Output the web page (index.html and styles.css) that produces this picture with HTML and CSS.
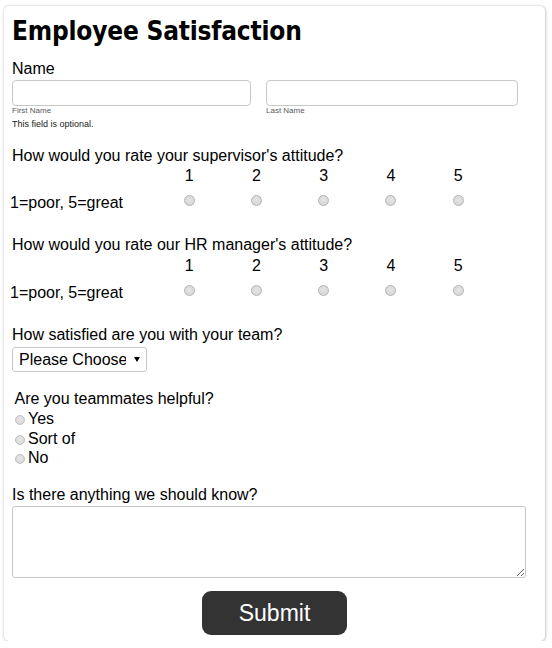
FILE: index.html
```html
<!DOCTYPE html>
<html lang="en">
<head>
<meta charset="utf-8">
<title>Employee Satisfaction</title>
<link rel="stylesheet" href="styles.css">
</head>
<body>
<form class="card">
  <h1 class="title">Employee Satisfaction</h1>

  <div class="q q-name">Name</div>
  <div class="name-row">
    <div class="name-col name-first">
      <input type="text" class="text-in">
      <span class="sub">First Name</span>
    </div>
    <div class="name-col name-last">
      <input type="text" class="text-in">
      <span class="sub">Last Name</span>
    </div>
  </div>
  <div class="hint">This field is optional.</div>

  <div class="block block-first">
    <div class="q">How would you rate your supervisor's attitude?</div>
    <div class="rating">
      <span></span>
      <span class="num">1</span><span class="num">2</span><span class="num">3</span><span class="num">4</span><span class="num">5</span>
      <span class="scale">1=poor, 5=great</span>
      <input type="radio" name="sup" class="radio"><input type="radio" name="sup" class="radio"><input type="radio" name="sup" class="radio"><input type="radio" name="sup" class="radio"><input type="radio" name="sup" class="radio">
    </div>
  </div>

  <div class="block">
    <div class="q">How would you rate our HR manager's attitude?</div>
    <div class="rating">
      <span></span>
      <span class="num">1</span><span class="num">2</span><span class="num">3</span><span class="num">4</span><span class="num">5</span>
      <span class="scale">1=poor, 5=great</span>
      <input type="radio" name="hr" class="radio"><input type="radio" name="hr" class="radio"><input type="radio" name="hr" class="radio"><input type="radio" name="hr" class="radio"><input type="radio" name="hr" class="radio">
    </div>
  </div>

  <div class="block">
    <div class="q">How satisfied are you with your team?</div>
    <div class="select-wrap">
      <select class="select">
        <option>Please Choose</option>
        <option>Very satisfied</option>
        <option>Satisfied</option>
        <option>Not satisfied</option>
      </select>
      <span class="arrow"></span>
    </div>
  </div>

  <div class="group">
    <div class="q">Are you teammates helpful?</div>
    <div class="opts">
      <label class="opt"><input type="radio" name="help" class="radio-sm">Yes</label>
      <label class="opt"><input type="radio" name="help" class="radio-sm">Sort of</label>
      <label class="opt"><input type="radio" name="help" class="radio-sm">No</label>
    </div>
  </div>

  <div class="block-know">
    <div class="q">Is there anything we should know?</div>
    <textarea class="area"></textarea>
  </div>

  <div class="actions">
    <button type="button" class="submit">Submit</button>
  </div>
</form>
</body>
</html>
```
FILE: styles.css
```css
html, body {
  margin: 0;
  padding: 0;
  background: #fff;
}

body {
  padding: 6px 0 0 4px;
  font-family: "Liberation Sans", Arial, sans-serif;
  font-size: 16px;
  color: #000;
}

.card {
  box-sizing: border-box;
  width: 541px;
  padding: 8px 8px 6px 8px;
  background: #fff;
  border-radius: 5px;
  box-shadow: 0 0 3px rgba(0, 0, 0, 0.22), 1px 1px 3px rgba(0, 0, 0, 0.12);
}

.title {
  margin: 0;
  font-family: "DejaVu Sans Condensed", "DejaVu Sans", sans-serif;
  font-weight: bold;
  font-size: 26px;
  line-height: 34px;
  letter-spacing: -0.2px;
  color: #000;
}

.q {
  line-height: 18px;
}

.q-name {
  margin-top: 12px;
}

.name-row {
  display: flex;
  gap: 15px;
  margin-top: 2px;
}

.name-col {
  display: flex;
  flex-direction: column;
}

.name-first .text-in {
  width: 239px;
}

.name-last .text-in {
  width: 252px;
}

.text-in {
  box-sizing: border-box;
  height: 26px;
  margin: 0;
  border: 1px solid #c8c8c8;
  border-radius: 4px;
  background: #fff;
}

.sub {
  font-size: 8px;
  line-height: 10px;
  color: #5a5a5a;
}

.hint {
  margin-top: 2px;
  font-size: 9px;
  line-height: 12px;
  color: #222;
}

.block {
  margin-top: 24px;
}

.block-first {
  margin-top: 16.5px;
}

.rating {
  display: grid;
  grid-template-columns: 145.5px repeat(5, 67.25px);
  grid-template-rows: 18px 18px;
  row-gap: 9px;
  margin-top: 2.5px;
  margin-left: -2px;
  line-height: 18px;
}

.num {
  text-align: center;
}

.scale {
  white-space: nowrap;
}

.radio {
  -webkit-appearance: none;
  appearance: none;
  box-sizing: border-box;
  width: 11px;
  height: 11px;
  margin: 1px 0 0 0;
  justify-self: center;
  align-self: start;
  border: 1px solid #b4b4b4;
  border-radius: 50%;
  background: radial-gradient(circle at 50% 40%, #e4e4e4 0%, #d4d4d4 100%);
}

.select-wrap {
  position: relative;
  width: 135px;
  margin-top: 3px;
}

.select {
  -webkit-appearance: none;
  appearance: none;
  box-sizing: border-box;
  display: block;
  width: 135px;
  height: 25px;
  margin: 0;
  padding: 0 20px 0 6px;
  border: 1px solid #c8c8c8;
  border-radius: 3px;
  background: #fff;
  font-family: "Liberation Sans", Arial, sans-serif;
  font-size: 16px;
  color: #000;
}

.arrow {
  position: absolute;
  left: 122px;
  top: 10px;
  width: 0;
  height: 0;
  border-left: 3px solid transparent;
  border-right: 3px solid transparent;
  border-top: 5px solid #000;
  pointer-events: none;
}

.group {
  margin-top: 18px;
  padding-left: 2.5px;
}

.opts {
  padding-top: 1.5px;
}

.opt {
  display: block;
  line-height: 19.5px;
}

.radio-sm {
  -webkit-appearance: none;
  appearance: none;
  box-sizing: border-box;
  width: 10px;
  height: 10px;
  margin: 0 3.5px 0 0;
  vertical-align: -1px;
  border: 1px solid #c0c0c0;
  border-radius: 50%;
  background: radial-gradient(circle at 50% 40%, #e6e6e6 0%, #d6d6d6 100%);
}

.block-know {
  margin-top: 18px;
}

.area {
  display: block;
  box-sizing: border-box;
  width: 514px;
  height: 72px;
  margin: 2.5px 0 0 0;
  border: 1px solid #c8c8c8;
  border-radius: 3px;
  resize: both;
  font-family: "Liberation Sans", Arial, sans-serif;
}

.actions {
  display: flex;
  justify-content: center;
  margin-top: 13px;
}

.submit {
  width: 145px;
  height: 44px;
  margin: 0;
  border: none;
  border-radius: 9px;
  background: #333;
  color: #fff;
  font-family: "Liberation Sans", Arial, sans-serif;
  font-size: 23px;
  cursor: pointer;
}
```
